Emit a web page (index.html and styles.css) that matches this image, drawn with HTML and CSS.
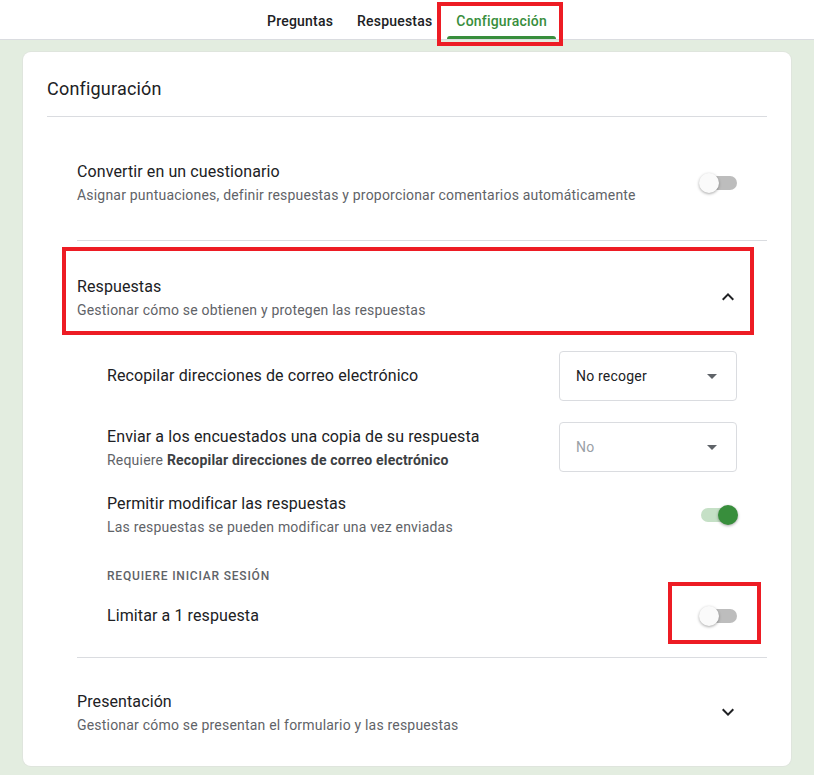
FILE: index.html
```html
<!DOCTYPE html>
<html lang="es">
<head>
<meta charset="utf-8">
<title>Configuración</title>
<link rel="stylesheet" href="styles.css">
</head>
<body>
<header class="topbar">
  <nav class="tabs">
    <span class="tab">Preguntas</span>
    <span class="tab">Respuestas</span>
    <span class="tab active">Configuración</span>
  </nav>
</header>

<main class="page">
  <section class="card">
    <h1 class="card-title">Configuración</h1>

    <div class="block quiz">
      <div class="row">
        <div class="texts">
          <div class="title">Convertir en un cuestionario</div>
          <div class="sub">Asignar puntuaciones, definir respuestas y proporcionar comentarios automáticamente</div>
        </div>
        <span class="switch"><span class="track"></span><span class="thumb"></span></span>
      </div>
    </div>

    <div class="block responses">
      <div class="row head">
        <div class="texts">
          <div class="title">Respuestas</div>
          <div class="sub">Gestionar cómo se obtienen y protegen las respuestas</div>
        </div>
        <svg class="chev" viewBox="0 0 24 24" width="24" height="24"><path d="M12 8l-6 6 1.41 1.41L12 10.83l4.59 4.58L18 14z"/></svg>
      </div>

      <div class="items">
        <div class="row item first">
          <div class="texts"><div class="title">Recopilar direcciones de correo electrónico</div></div>
          <div class="select"><span>No recoger</span><span class="caret"></span></div>
        </div>
        <div class="row item">
          <div class="texts">
            <div class="title">Enviar a los encuestados una copia de su respuesta</div>
            <div class="sub">Requiere <b>Recopilar direcciones de correo electrónico</b></div>
          </div>
          <div class="select disabled"><span>No</span><span class="caret"></span></div>
        </div>
        <div class="row item edit">
          <div class="texts">
            <div class="title">Permitir modificar las respuestas</div>
            <div class="sub">Las respuestas se pueden modificar una vez enviadas</div>
          </div>
          <span class="switch on"><span class="track"></span><span class="thumb"></span></span>
        </div>
        <div class="group-label">Requiere iniciar sesión</div>
        <div class="row item last">
          <div class="texts"><div class="title">Limitar a 1 respuesta</div></div>
          <span class="switch"><span class="track"></span><span class="thumb"></span></span>
        </div>
      </div>
    </div>

    <div class="block presentation">
      <div class="row head">
        <div class="texts">
          <div class="title">Presentación</div>
          <div class="sub">Gestionar cómo se presentan el formulario y las respuestas</div>
        </div>
        <svg class="chev" viewBox="0 0 24 24" width="24" height="24"><path d="M16.59 8.59L12 13.17 7.41 8.59 6 10l6 6 6-6z"/></svg>
      </div>
    </div>
  </section>
</main>

<div class="mark mark-tab"></div>
<div class="mark mark-resp"></div>
<div class="mark mark-limit"></div>
</body>
</html>
```

FILE: styles.css
```css
* { box-sizing: border-box; }
html, body { margin: 0; padding: 0; }
body {
  position: relative;
  width: 814px;
  height: 775px;
  overflow: hidden;
  background: #e3ede0;
  font-family: Roboto, "Liberation Sans", Arial, sans-serif;
  color: #202124;
}

.topbar {
  height: 40px;
  background: #fff;
  border-bottom: 1px solid #dadce0;
  display: flex;
  justify-content: center;
}
.tabs { display: flex; height: 39px; }
.tab {
  position: relative;
  padding: 0 12px;
  font-size: 14px;
  font-weight: 500;
  letter-spacing: 0.2px;
  line-height: 42px;
  color: #202124;
}
.tab.active { color: #388e3c; }
.tab.active::after {
  content: "";
  position: absolute;
  left: 3px;
  right: 3px;
  bottom: 0;
  height: 3px;
  background: #388e3c;
  border-radius: 3px 3px 0 0;
}

.page { padding: 12px 23px 0 23px; }
.card {
  background: #fff;
  border-radius: 8px;
  padding: 0 24px;
  height: 714px;
  box-shadow: 0 0 0 1px #dfe5dd;
}
.card-title {
  margin: 0;
  height: 65px;
  border-bottom: 1px solid #dadce0;
  font-size: 18px;
  font-weight: 400;
  letter-spacing: 0.2px;
  line-height: 24px;
  padding-top: 25px;
  color: #202124;
}

.block { margin-left: 30px; }
.block + .block { border-top: 1px solid #dadce0; }

.row {
  display: flex;
  align-items: center;
  justify-content: space-between;
  padding-right: 30px;
}
.title { font-size: 16px; line-height: 24px; letter-spacing: 0.1px; color: #202124; }
.sub { font-size: 14px; line-height: 20px; letter-spacing: 0.2px; color: #5f6368; margin-top: 1px; }
.sub b { font-weight: 700; color: #3c4043; }

.quiz { padding: 43px 0 35px; }
.responses { padding: 34px 0 29px; }
.presentation { padding: 32px 0 32px; }

.head .chev { fill: #202124; margin-right: -3px; margin-top: -2px; }

.items { padding-left: 30px; }
.item { margin-top: 21px; }
.item.first { margin-top: 31px; }
.item.edit { margin-top: 20px; }
.group-label {
  margin-top: 31px;
  font-size: 12px;
  font-weight: 500;
  line-height: 16px;
  letter-spacing: 0.8px;
  text-transform: uppercase;
  color: #5f6368;
}
.item.last { margin-top: 20px; }

.select {
  width: 178px;
  height: 50px;
  border: 1px solid #dadce0;
  border-radius: 4px;
  display: flex;
  align-items: center;
  justify-content: space-between;
  padding: 0 19px 0 16px;
  font-size: 14px;
  letter-spacing: 0.2px;
  color: #202124;
}
.select.disabled { color: #9aa0a6; }
.caret {
  width: 0;
  height: 0;
  border-left: 5px solid transparent;
  border-right: 5px solid transparent;
  border-top: 5px solid #5f6368;
}

.switch {
  position: relative;
  width: 37px;
  height: 20px;
  display: inline-block;
}
.switch .track {
  position: absolute;
  left: 1px;
  right: 0;
  top: 3px;
  height: 14px;
  border-radius: 7px;
  background: #bdbdbd;
}
.switch .thumb {
  position: absolute;
  left: -1px;
  top: 0;
  width: 20px;
  height: 20px;
  border-radius: 50%;
  background: #fafafa;
  box-shadow: 0 1px 3px rgba(0,0,0,0.35);
}
.switch.on .track { background: #c5e0c6; }
.switch.on .thumb { left: 18px; background: #388e3c; }

.mark {
  position: absolute;
  border: 4px solid #ed1c24;
  pointer-events: none;
}
.mark-tab { left: 437px; top: 2px; width: 126px; height: 44px; }
.mark-resp { left: 62px; top: 247px; width: 692px; height: 88px; }
.mark-limit { left: 668px; top: 582px; width: 93px; height: 62px; }
```
